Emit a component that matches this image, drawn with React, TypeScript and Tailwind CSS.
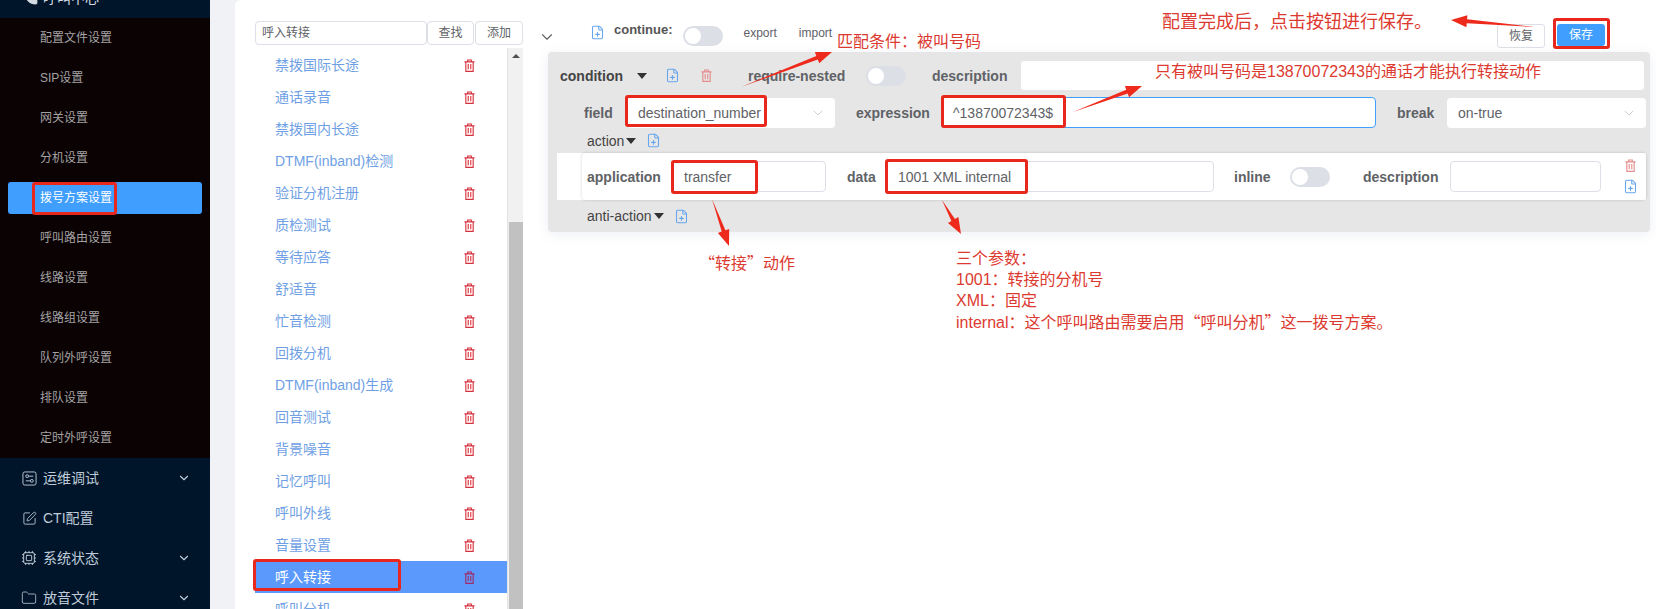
import { ChevronDown, Cpu, Folder, FilePlus, Phone, SquarePen } from "lucide-react";

const subMenu = ["配置文件设置", "SIP设置", "网关设置", "分机设置", "拨号方案设置", "呼叫路由设置", "线路设置", "线路组设置", "队列外呼设置", "排队设置", "定时外呼设置"];

const plans = ["禁拨国际长途", "通话录音", "禁拨国内长途", "DTMF(inband)检测", "验证分机注册", "质检测试", "等待应答", "舒适音", "忙音检测", "回拨分机", "DTMF(inband)生成", "回音测试", "背景噪音", "记忆呼叫", "呼叫外线", "音量设置", "呼入转接", "呼叫分机"];

function TrashIcon({ className }: { className: string }) {
  return (
    <svg viewBox="0 0 12 14" className={className} fill="none" stroke="currentColor" strokeWidth="1.2">
      <path d="M0.5 3h11M4 3V1h4v2M2 3v10.4h8V3M4.6 5.4v5.6M7.4 5.4v5.6" />
    </svg>
  );
}

function DocIcon({ className = "" }: { className?: string }) {
  return <FilePlus className={`w-[15px] h-[15px] text-[#66a6ee] shrink-0 ${className}`} strokeWidth={1.7} />;
}

function Caret({ className = "" }: { className?: string }) {
  return <span className={`w-0 h-0 border-x-[5px] border-x-transparent border-t-[6px] border-t-[#333] shrink-0 ${className}`} />;
}

function Toggle({ className = "" }: { className?: string }) {
  return (
    <span className={`w-10 h-5 rounded-full bg-[#dcdfe6] flex items-center pl-[2px] shrink-0 ${className}`}>
      <span className="w-4 h-4 rounded-full bg-white" />
    </span>
  );
}

function Label({ text, className }: { text: string; className: string }) {
  return <span className={`text-sm font-bold text-[#606266] whitespace-nowrap shrink-0 ${className}`}>{text}</span>;
}

function Box({ value, className, focus }: { value?: string; className: string; focus?: boolean }) {
  return (
    <div className={`h-[31px] bg-white rounded border ${focus ? "border-[#409eff]" : "border-[#dcdfe6]"} flex items-center text-sm text-[#606266] shrink-0 ${className}`}>
      {value}
    </div>
  );
}

function SelectBox({ value, className }: { value: string; className: string }) {
  return (
    <div className={`h-[30px] bg-white rounded flex items-center justify-between pl-[11px] pr-[9px] text-sm text-[#606266] shrink-0 ${className}`}>
      {value}
      <ChevronDown className="w-4 h-4 text-[#c0c4cc]" strokeWidth={1.2} />
    </div>
  );
}

// tapered annotation arrow, thin at the tail and barbed at the head
function arrowPoints(x1: number, y1: number, x2: number, y2: number) {
  const len = Math.hypot(x2 - x1, y2 - y1);
  const ux = (x2 - x1) / len;
  const uy = (y2 - y1) / len;
  const nx = -uy;
  const ny = ux;
  const bx = x2 - ux * 16;
  const by = y2 - uy * 16;
  const p = (x: number, y: number) => `${x.toFixed(1)},${y.toFixed(1)}`;
  return [
    p(x1, y1),
    p(bx + nx * 2, by + ny * 2),
    p(bx + nx * 6, by + ny * 6),
    p(x2, y2),
    p(bx - nx * 6, by - ny * 6),
    p(bx - nx * 2, by - ny * 2),
  ].join(" ");
}

const arrows = [
  [741, 87, 832, 52],
  [1073, 112, 1142, 86],
  [1535, 27, 1451, 20],
  [712, 199, 729, 246],
  [942, 200, 961, 234],
];

function RedBox({ className }: { className: string }) {
  return <div className={`absolute border-[3px] border-[#e8281d] rounded-[3px] ${className}`} />;
}

function Note({ children, className }: { children: React.ReactNode; className: string }) {
  return <div className={`absolute text-[#dc3a30] text-base whitespace-nowrap ${className}`}>{children}</div>;
}

// full-width curly quote, the Latin font's one is too narrow
function Q({ children }: { children: string }) {
  return <span className="font-['Noto_Sans_CJK_SC',sans-serif]">{children}</span>;
}

export default function App() {
  return (
    <div className="relative w-[1656px] h-[609px] overflow-hidden flex bg-[#f0f2f5] font-['Liberation_Sans','Noto_Sans_CJK_SC',sans-serif]">
      {/* Sidebar */}
      <aside className="w-[210px] h-full bg-[#001529] shrink-0 overflow-hidden text-sm text-[#bfcbd9]">
        <div className="h-10 -mt-[22px] flex items-center pl-[24px] text-[#d5dbe2]">
          <Phone className="w-[14px] h-[14px] mr-[5px] fill-current" />
          呼叫中心
        </div>
        <div className="h-[440px] bg-[#0b0204] text-xs text-[#a3a3a3]">
          {subMenu.map((name) =>
            name === "拨号方案设置" ? (
              <div key={name} className="h-10 flex items-center px-2">
                <div className="w-full h-8 bg-[#409eff] rounded-[3px] flex items-center pl-8 text-white">{name}</div>
              </div>
            ) : (
              <div key={name} className="h-10 flex items-center pl-10">{name}</div>
            )
          )}
        </div>
        <div className="h-10 flex items-center pl-[22px] pr-[19px]">
          <svg viewBox="0 0 16 16" className="w-[15px] h-[15px] mr-[6px] shrink-0" fill="none" stroke="currentColor" strokeWidth="1">
            <rect x="1" y="1" width="14" height="14" rx="2" />
            <circle cx="5.5" cy="5.5" r="1.5" />
            <circle cx="10.5" cy="10.5" r="1.5" />
            <path d="M7 5.5h5M4 10.5h5" />
          </svg>
          <span className="flex-1">运维调试</span>
          <ChevronDown className="w-[14px] h-[14px]" />
        </div>
        <div className="h-10 flex items-center pl-[22px]">
          <SquarePen className="w-[15px] h-[15px] mr-[6px]" strokeWidth={1.4} />
          CTI配置
        </div>
        <div className="h-10 flex items-center pl-[21px] pr-[19px]">
          <Cpu className="w-4 h-4 mr-[6px]" strokeWidth={1.4} />
          <span className="flex-1">系统状态</span>
          <ChevronDown className="w-[14px] h-[14px]" />
        </div>
        <div className="h-10 flex items-center pl-[21px] pr-[19px]">
          <Folder className="w-4 h-4 mr-[6px]" strokeWidth={1.2} />
          <span className="flex-1">放音文件</span>
          <ChevronDown className="w-[14px] h-[14px]" />
        </div>
      </aside>

      {/* Content */}
      <main className="ml-[25px] flex-1 bg-white rounded-tl-md flex min-w-0">
        {/* Dial plan list */}
        <section className="w-[288px] shrink-0 pl-5 pt-[21px] flex flex-col">
          <div className="flex h-6 text-xs text-[#606266]">
            <div className="w-[172px] border border-[#dcdfe6] rounded flex items-center pl-[6px]">呼入转接</div>
            <div className="w-[47px] border border-[#dcdfe6] rounded flex items-center justify-center">查找</div>
            <div className="w-[48px] ml-[1px] border border-[#dcdfe6] rounded flex items-center justify-center">添加</div>
          </div>
          <div className="flex flex-1 mt-[3px] min-h-0">
            <ul className="w-[252px] overflow-hidden pt-px">
              {plans.map((name) => (
                <li
                  key={name}
                  className={`h-8 flex items-center justify-between pl-5 pr-[32px] text-sm ${name === "呼入转接" ? "bg-[#5b9afc] text-white" : "text-[#6f9fe4]"}`}
                >
                  {name}
                  <TrashIcon className={`w-[11px] h-[13px] ${name === "呼入转接" ? "text-[#a02a6a]" : "text-[#d8303a]"}`} />
                </li>
              ))}
            </ul>
            <div className="w-[16px] bg-[#f1f1f1] border-l border-[#e2e2e2] flex flex-col items-center overflow-hidden">
              <span className="mt-[6px] w-0 h-0 border-x-[4px] border-x-transparent border-b-[4px] border-b-[#505050]" />
              <div className="mt-[164px] w-[14px] flex-1 bg-[#c1c1c1]" />
            </div>
          </div>
        </section>

        {/* Dial plan editor */}
        <section className="flex-1 min-w-0">
          <div className="h-[52px] flex items-start">
            <ChevronDown className="w-[18px] h-[18px] ml-[15px] mt-[28px] text-[#606266]" strokeWidth={1.5} />
            <DocIcon className="ml-[34px] mt-[25px]" />
            <span className="ml-[9px] mt-[22px] text-[13px] font-bold text-[#555] leading-4">continue:</span>
            <Toggle className="ml-[10px] mt-[26px]" />
            <span className="ml-[21px] mt-[25px] text-xs text-[#606266] leading-4">export</span>
            <span className="ml-[22px] mt-[25px] text-xs text-[#606266] leading-4">import</span>
            <div className="ml-auto mt-6 w-12 h-6 border border-[#dcdfe6] rounded-[3px] text-xs text-[#606266] flex items-center justify-center">恢复</div>
            <div className="ml-3 mr-[51px] mt-6 w-12 h-[22px] bg-[#409eff] rounded-[3px] text-xs text-white flex items-center justify-center">保存</div>
          </div>

          <div className="ml-[25px] mr-[6px] h-[180px] bg-[#e6e6e6] rounded shadow-[0_2px_12px_rgba(80,100,160,0.1)] flex flex-col">
            <div className="mt-2 h-[31px] flex items-center pl-[12px]">
              <span className="w-[64px] text-sm font-bold text-[#444]">condition</span>
              <Caret className="ml-[13px]" />
              <DocIcon className="ml-[18px]" />
              <TrashIcon className="w-[11px] h-[13px] ml-[21px] text-[#e58a8a]" />
              <Label text="require-nested" className="w-[118px] ml-[36px]" />
              <Toggle />
              <Label text="description" className="w-[88px] ml-[26px]" />
              <Box className="w-[625px] border-[#e6e6e6]" />
            </div>
            <div className="mt-[6px] h-[31px] flex items-center pl-[36px]">
              <Label text="field" className="w-[43px]" />
              <SelectBox value="destination_number" className="w-[208px]" />
              <Label text="expression" className="w-[85px] ml-[21px]" />
              <Box value="^13870072343$" className="w-[435px] pl-[11px]" focus />
              <Label text="break" className="w-[50px] ml-[21px]" />
              <SelectBox value="on-true" className="w-[199px]" />
            </div>
            <div className="h-[25px] flex items-center pl-[39px] text-sm text-[#444]">
              <span className="w-[37px]">action</span>
              <Caret className="ml-[2px]" />
              <DocIcon className="ml-[10px]" />
            </div>
            <div className="ml-[9px] mr-[4px] h-[47px] bg-white">
              <div className="ml-[25px] h-full rounded shadow-[0_0_3px_rgba(0,0,0,0.18)] flex items-center pl-[5px]">
                <Label text="application" className="w-[85px]" />
                <Box value="transfer" className="w-[154px] pl-[11px]" />
                <Label text="data" className="w-[39px] ml-[21px]" />
                <Box value="1001 XML internal" className="w-[328px] pl-[11px]" />
                <Label text="inline" className="w-[56px] ml-[20px]" />
                <Toggle />
                <Label text="description" className="w-[87px] ml-[33px]" />
                <Box className="w-[151px]" />
                <div className="ml-[22px] flex flex-col items-center gap-[7px]">
                  <TrashIcon className="w-[11px] h-[13px] text-[#e58a8a]" />
                  <DocIcon />
                </div>
              </div>
            </div>
            <div className="h-[32px] flex items-center pl-[39px] text-sm text-[#444]">
              <span className="w-[65px]">anti-action</span>
              <Caret className="ml-[2px]" />
              <DocIcon className="ml-[10px]" />
            </div>
          </div>
        </section>
      </main>

      {/* Annotations drawn over the screenshot */}
      <RedBox className="left-[32px] top-[182px] w-[85px] h-[33px]" />
      <RedBox className="left-[253px] top-[559px] w-[148px] h-[32px]" />
      <RedBox className="left-[625px] top-[95px] w-[142px] h-[32px]" />
      <RedBox className="left-[941px] top-[95px] w-[125px] h-[33px]" />
      <RedBox className="left-[671px] top-[160px] w-[87px] h-[34px]" />
      <RedBox className="left-[885px] top-[159px] w-[143px] h-[35px]" />
      <RedBox className="left-[1553px] top-[18px] w-[57px] h-[31px]" />

      <svg className="absolute inset-0 w-full h-full pointer-events-none">
        {arrows.map(([x1, y1, x2, y2]) => (
          <polygon key={x1} points={arrowPoints(x1, y1, x2, y2)} fill="#ee2a1c" />
        ))}
      </svg>

      <Note className="left-[837px] top-[30px]">{"匹配条件\uFF1A被叫号码"}</Note>
      <Note className="left-[1162px] top-[8px] text-lg">{"配置完成后\uFF0C点击按钮进行保存。"}</Note>
      <Note className="left-[1155px] top-[60px]">只有被叫号码是13870072343的通话才能执行转接动作</Note>
      <Note className="left-[699px] top-[250px]"><Q>“</Q>转接<Q>”</Q>动作</Note>
      <Note className="left-[956px] top-[248px] leading-[21px]">
        <div>{"三个参数\uFF1A"}</div>
        <div>{"1001\uFF1A转接的分机号"}</div>
        <div>{"XML\uFF1A固定"}</div>
        <div>{"internal\uFF1A这个呼叫路由需要启用"}<Q>“</Q>呼叫分机<Q>”</Q>这一拨号方案。</div>
      </Note>
    </div>
  );
}
